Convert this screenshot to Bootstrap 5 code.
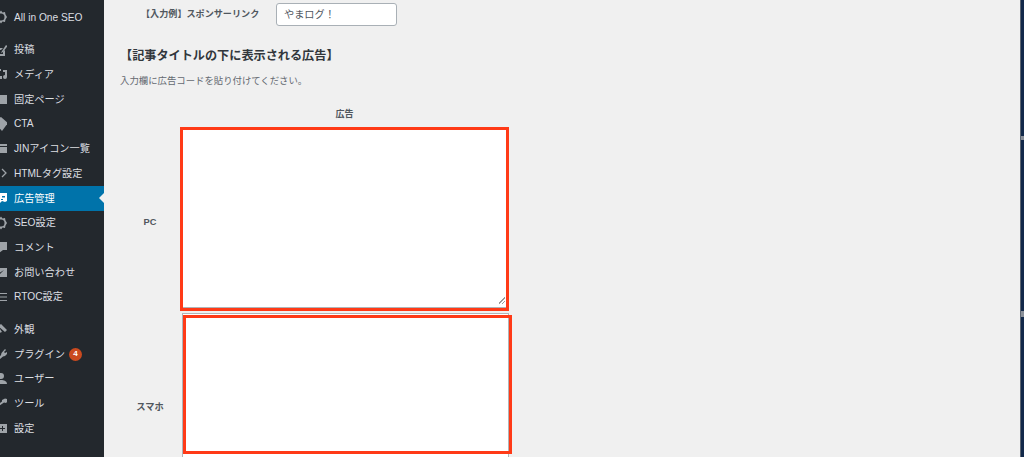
<!DOCTYPE html>
<html lang="ja"><head><meta charset="utf-8"><title>広告管理</title>
<link href="https://cdn.jsdelivr.net/npm/bootstrap@5.3.0/dist/css/bootstrap.min.css" rel="stylesheet">
<style>
html,body{height:457px;overflow:hidden;background:#f0f0f0}
body{font-family:"Liberation Sans","Noto Sans CJK JP",sans-serif;color:#3c434a;font-size:10px}
.shell{height:457px;overflow:hidden}
.wpside{width:104px;background:#23282d;color:#dcdfe2;flex:none;padding-top:5px;font-size:10.2px}
.wpitem{height:24.7px;padding-left:14px;position:relative}
.wpitem svg{position:absolute;left:-5px;top:5px;width:12px;height:14px;fill:#9ea3a8}
.wpitem.cur{background:#0073aa;color:#fff}
.wpitem.cur svg{fill:#fff}
.wpitem.cur::after{content:"";position:absolute;right:0;top:7px;border:5px solid transparent;border-right-color:#f0f0f0;border-left:0}
.gapt{height:8px}.gapb{height:8px}
.bub{width:13px;height:13px;border-radius:50%;background:#ca4a1f;color:#fff;font-size:8px;font-weight:700;margin-left:4px}
.wpmain{min-width:0}
.topline{height:27px;padding-left:37px;padding-top:3px}
.toplab{font-size:9.1px;font-weight:700;color:#50575e;width:135px;padding-top:5px}
.exbox{width:121px;height:23px;background:#fff;border:1px solid #a9b0b6;border-radius:3px;font-size:10.2px;padding-left:7px;color:#50575e}
.h3t{font-size:12.15px;font-weight:700;color:#32373c;margin:0;padding-left:16px;line-height:16px;margin-top:21px}
.desc{font-size:9.4px;margin:0;padding-left:16px;line-height:14px;margin-top:10px;color:#646970}
.colhead{font-size:9px;font-weight:700;width:481px;text-align:center;line-height:12px;margin-top:20px;color:#50575e}
.rowlab{width:76px;font-size:9.3px;font-weight:700;text-align:center;padding-left:16px;flex:none;color:#50575e}
.lab1{margin-top:17px}
.adta{background:#fff;border:1px solid #b0b4b8;flex:none;position:relative}
.ta1{width:328px;height:180px;margin-top:8px}
.ta2{width:327px;height:194px;margin-left:2px;margin-top:5px}
.redbox{position:absolute;border:3px solid #ff3a17;pointer-events:none}
.rb1{left:-1px;top:-2px;width:329px;height:184px}
.rb2{left:0;top:1px;width:329px;height:139px}
.grip{position:absolute;right:2px;bottom:3px;width:7px;height:7px;background:linear-gradient(135deg,transparent 50%,#9a9a9a 50%,#9a9a9a 60%,transparent 60%,transparent 75%,#9a9a9a 75%,#9a9a9a 85%,transparent 85%)}
.edge{width:4px;background:#12294a;flex:none;border-left:1px solid #5d6672}
.speck{height:4px;background:#8a9099}
.sp1{margin-top:136px}
.sp2{margin-top:171px;height:6px}
.strk{fill:none!important;stroke:#9ea3a8;stroke-width:1.3}
</style></head><body>
<div class="shell d-flex">
<nav class="wpside">
<div class="wpitem d-flex align-items-center"><svg viewBox="0 0 12 14"><path fill-rule="evenodd" d="M6 .5l1.500 2 2.500-.5.5 2.500 1.500 2.500-1.500 2.500-.5 2.500-2.500-.5-1.500 2-1.500-2-2.500.5-.5-2.500L0 7l1.500-2.500.5-2.500 2.500.5zM6 3.500a3.500 3.500 0 100 7 3.500 3.500 0 000-7z"/></svg>All in One SEO</div>
<div class="gapt"></div>
<div class="wpitem d-flex align-items-center"><svg viewBox="0 0 12 14"><path d="M4 5h4L6 7H5v4h3V9l2-2v6H4zM7 8l4-6 1.500 1-4.500 6-2 1z"/></svg>投稿</div>
<div class="wpitem d-flex align-items-center"><svg viewBox="0 0 12 14"><path d="M3 2h3v2H5v3H3zM5 9h2v3H3v-2h2zM8 3h4v7a2 2 0 11-2-2V5H8z"/></svg>メディア</div>
<div class="wpitem d-flex align-items-center"><svg viewBox="0 0 12 14"><path d="M3 3h9v9H3z"/></svg>固定ページ</div>
<div class="wpitem d-flex align-items-center"><svg viewBox="0 0 12 14"><path d="M6 0l7 6-6 8-6-7V2z"/></svg>CTA</div>
<div class="wpitem d-flex align-items-center"><svg viewBox="0 0 12 14"><path fill-rule="evenodd" d="M2 3h10v9H2zM4 5v1h8V5z"/></svg>JINアイコン一覧</div>
<div class="wpitem d-flex align-items-center"><svg viewBox="0 0 12 14"><path class="strk" d="M7 3l4 4-4 4"/></svg>HTMLタグ設定</div>
<div class="wpitem cur d-flex align-items-center"><svg viewBox="0 0 12 14"><path fill-rule="evenodd" d="M1 2h11v8l-2 1-3-1-2 2-2-2H1zM7 5v1.500h3V5zM6 8v1h2V8z"/></svg>広告管理</div>
<div class="wpitem d-flex align-items-center"><svg viewBox="0 0 12 14"><path fill-rule="evenodd" d="M6 .5l1.500 2 2.500-.5.5 2.500 1.500 2.500-1.500 2.500-.5 2.500-2.500-.5-1.500 2-1.500-2-2.500.5-.5-2.500L0 7l1.500-2.500.5-2.500 2.500.5zM6 3.500a3.500 3.500 0 100 7 3.500 3.500 0 000-7z"/></svg>SEO設定</div>
<div class="wpitem d-flex align-items-center"><svg viewBox="0 0 12 14"><path d="M1 2h11v8H8l-4 3v-3H1z"/></svg>コメント</div>
<div class="wpitem d-flex align-items-center"><svg viewBox="0 0 12 14"><path fill-rule="evenodd" d="M1 3h11v9H1zM3 7l2 2 4-4-4 2.500-1-1z"/></svg>お問い合わせ</div>
<div class="wpitem d-flex align-items-center"><svg viewBox="0 0 12 14"><path d="M4 3h8v1H4zM4 6.500h8v1H4zM4 10h8v1H4z"/></svg>RTOC設定</div>
<div class="gapb"></div>
<div class="wpitem d-flex align-items-center"><svg viewBox="0 0 12 14"><path d="M3 4l3-2 6 6-2 2zM2 8l3-1 2 3-3 1z"/></svg>外観</div>
<div class="wpitem d-flex align-items-center"><svg viewBox="0 0 12 14"><path d="M10 2l1 1-2 2 1 1 2-1 1 1-3 3-2 .5L5 12H3l3-4 .5-2z"/></svg><span>プラグイン</span><span class="bub d-inline-flex align-items-center justify-content-center">4</span></div>
<div class="wpitem d-flex align-items-center"><svg viewBox="0 0 12 14"><path d="M6 1a3 3 0 110 6 3 3 0 010-6zM1 12c0-3 2-4 5-4s6 1 6 4z"/></svg>ユーザー</div>
<div class="wpitem d-flex align-items-center"><svg viewBox="0 0 12 14"><path d="M12 3l1 2-2 2-2-.5L4 10 2 9l5-3.500L7 4l3-1.500z"/></svg>ツール</div>
<div class="wpitem d-flex align-items-center"><svg viewBox="0 0 12 14"><path fill-rule="evenodd" d="M3 3h9v9H3zM7 5v2H5v1h2v2h1V8h2V7H8V5z"/></svg>設定</div>
</nav>
<main class="wpmain flex-grow-1">
<div class="topline d-flex align-items-start"><span class="toplab">【入力例】スポンサーリンク</span><span class="exbox d-flex align-items-center">やまログ！</span></div>
<h3 class="h3t">【記事タイトルの下に表示される広告】</h3>
<p class="desc">入力欄に広告コードを貼り付けてください。</p>
<div class="colhead">広告</div>
<div class="d-flex align-items-center"><div class="rowlab lab1">PC</div><div class="adta ta1"><span class="grip"></span><span class="redbox rb1"></span></div></div>
<div class="d-flex align-items-center"><div class="rowlab">スマホ</div><div class="adta ta2"><span class="redbox rb2"></span></div></div>
</main>
<div class="edge d-flex flex-column"><div class="speck sp1"></div><div class="speck sp2"></div></div>
</div>
</body></html>
